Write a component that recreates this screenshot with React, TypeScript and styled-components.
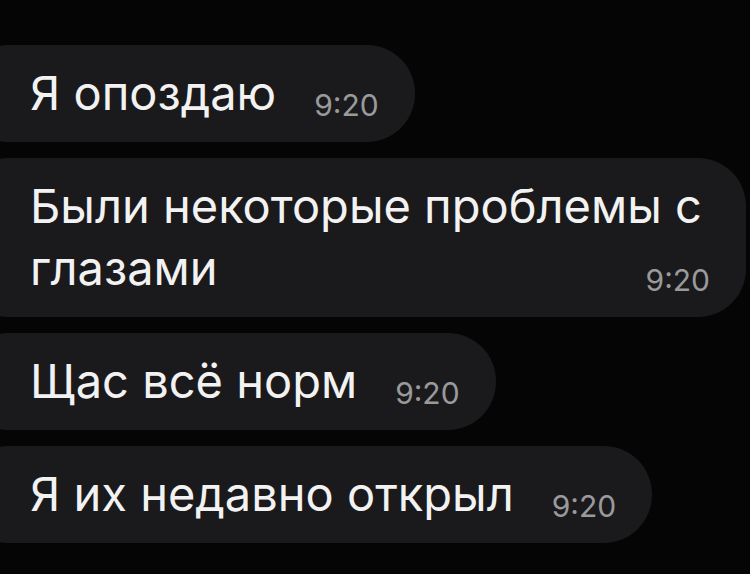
import React from "react";
import styled, { createGlobalStyle } from "styled-components";

type Message = {
  text: string;
  time: string;
  width?: number;
};

const messages: Message[] = [
  { text: "Я опоздаю", time: "9:20" },
  { text: "Были некоторые проблемы с глазами", time: "9:20", width: 786 },
  { text: "Щас всё норм", time: "9:20" },
  { text: "Я их недавно открыл", time: "9:20" }
];

const App: React.FC = () => {
  return (
    <>
      <GlobalStyle />
      <Chat>
        {messages.map((m, i) => (
          <Bubble key={i} fixedWidth={m.width}>
            <BubbleText>{m.text}</BubbleText>
            <BubbleTime>{m.time}</BubbleTime>
          </Bubble>
        ))}
      </Chat>
    </>
  );
};

const GlobalStyle = createGlobalStyle`
  html, body {
    margin: 0;
    padding: 0;
    background: #050505;
  }
  body {
    font-family: Inter, "Liberation Sans", Arial, sans-serif;
    overflow: hidden;
  }
`;

const Chat = styled.div`
  display: flex;
  flex-direction: column;
  align-items: flex-start;
  gap: 16px;
  width: 750px;
  height: 574px;
  padding-top: 45px;
  box-sizing: border-box;
  overflow: hidden;
`;

const Bubble = styled.div<{ fixedWidth?: number }>`
  display: block;
  box-sizing: border-box;
  width: ${({ fixedWidth }) => (fixedWidth ? `${fixedWidth}px` : "fit-content")};
  margin-left: -40px;
  padding: 17px 36px 17px 70px;
  background-color: #1a1a1c;
  border-radius: 48px;
  color: #f2f2f2;

  &::after {
    content: "";
    display: block;
    clear: both;
  }
`;

const BubbleText = styled.span`
  font-size: 47px;
  line-height: 62px;
`;

const BubbleTime = styled.span`
  float: right;
  margin: 23px 0 0 38px;
  font-size: 30px;
  line-height: 40px;
  color: #9a9a9c;
`;

export default App;
